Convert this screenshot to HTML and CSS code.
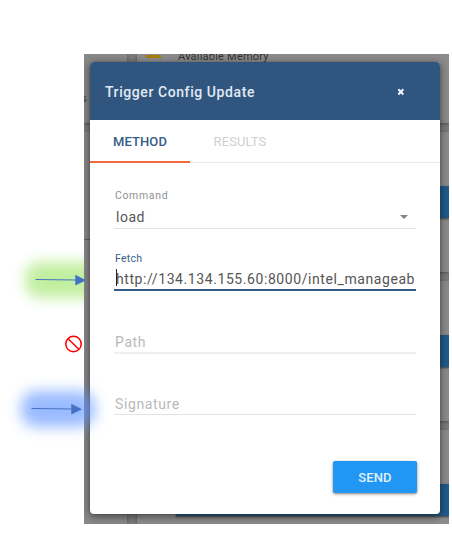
FILE: index.html
```html
<!DOCTYPE html>
<html lang="en">
<head>
<meta charset="utf-8">
<title>Trigger Config Update</title>
<link rel="stylesheet" href="styles.css">
</head>
<body>
<main class="stage">
  <div class="glow glow-green"></div>
  <section class="screen">
    <div class="rail"><div class="rail-card rail-first"><span class="rail-text">s</span></div><div class="rail-card rail-second"></div><div class="rail-card rail-third"></div></div>
    <div class="board">
      <div class="card card-top"><i class="swatch"></i><span>Available Memory</span></div>
      <div class="card"><div class="bar"></div></div>
      <div class="card"><div class="bar"></div></div>
      <div class="card card-last"><div class="bar"></div></div>
    </div>
    <div class="dialog">
      <header class="dialog-head">
        <h1>Trigger Config Update</h1>
        <svg class="close" width="8" height="8" viewBox="0 0 8 8"><path d="M1.3 1.3 6.3 6.5M6.3 1.3 1.3 6.5"/></svg>
      </header>
      <nav class="tabs"><div class="tab active">METHOD</div><div class="tab">RESULTS</div></nav>
      <form class="form">
        <div class="field command"><label>Command</label><div class="value select"><span>load</span><i class="caret"></i></div></div>
        <div class="field fetch"><label>Fetch</label><div class="value"><i class="cursor"></i><span>http://134.134.155.60:8000/intel_manageab</span></div></div>
        <div class="field empty path">Path</div>
        <div class="field empty signature">Signature</div>
        <button type="button" class="send">SEND</button>
      </form>
    </div>
  </section>
  <div class="glow glow-blue"></div>
  <svg class="marks" width="110" height="180" viewBox="0 260 110 180">
    <path class="line" d="M35.500 279.500 76 280M31.500 408.500 72 409"/>
    <path class="head" d="M75.300 274.800 86 280.200 75.300 285.500zM71.300 403.800 82 409.200 71.300 414.500z"/>
    <g class="ban"><circle cx="73.500" cy="344" r="7.700"/><path d="M68.300 339 78.900 349.200"/></g>
  </svg>
</main>
</body>
</html>
```
FILE: styles.css
```css
* { box-sizing: border-box; }
body { margin: 0; background: #fff; font-family: Roboto, sans-serif; }
.stage { position: relative; width: 452px; height: 540px; padding: 54px 3px 16px 84px; overflow: hidden; }
.screen { position: relative; display: flex; width: 365px; height: 470px; overflow: hidden; background: #7c7c7c; }
.rail { width: 43px; display: flex; flex-direction: column; gap: 9px; }
.rail-card { background: #888; box-shadow: 0 1px 3px #555; }
.rail-first { height: 69px; padding-top: 38px; }
.rail-second { height: 107px; }
.rail-third { flex: 1; margin-top: -8px; }
.rail-text { display: block; font-size: 11px; line-height: 14px; margin-left: -3px; color: #333; }
.board { flex: 1; margin-left: 10px; display: flex; flex-direction: column; gap: 9px; }
.card { height: 140px; padding-top: 54px; background: #8c8c8c; box-shadow: 0 1px 3px #555; }
.card-top { height: 69px; padding: 0 0 0 9px; display: flex; align-items: flex-start; color: #333; font-size: 11px; line-height: 13px; letter-spacing: .22px; }
.card-top span { margin: -4px 0 0 17px; }
.swatch { width: 15px; height: 3px; margin-top: 1px; background: #a8800d; }
.bar { height: 32px; margin-left: 39px; background: #205a8a; box-shadow: 0 1px 2px #444; }
.card-last { height: 94px; }
.dialog { position: absolute; left: 6px; top: 8px; width: 350px; height: 452px; border-radius: 4px; overflow: hidden; background: #fff; box-shadow: 0 2px 9px rgba(0,0,0,.55), 0 0 1px #555; }
.dialog-head { height: 58px; padding: 0 35px 0 15px; display: flex; justify-content: space-between; align-items: center; background: #30567f; color: #e2eaf3; }
h1 { margin: 2px 0 0; font-size: 14px; font-weight: 500; letter-spacing: .58px; }
.close { margin-top: 1px; fill: none; stroke: #f1f5fa; stroke-width: 2; }
.tabs { display: flex; height: 43px; border-bottom: 1px solid #e8e8e8; }
.tab { width: 100px; height: 43px; text-align: center; line-height: 43px; font-size: 13px; letter-spacing: .1px; color: #cfcfcf; }
.tab.active { color: #365c86; border-bottom: 2px solid #f26a3b; font-weight: 500; }
.form { display: flex; flex-direction: column; padding: 25px 24px 0; }
.field { border-bottom: 1px solid #e2e2e2; color: #555; }
.field label { display: block; padding: 1px 0 0 1px; font-size: 10.500px; line-height: 14px; letter-spacing: .65px; color: #929292; }
.value { position: relative; height: 25px; padding-left: 2px; font-size: 14px; line-height: 28px; letter-spacing: .58px; white-space: nowrap; }
.select { display: flex; justify-content: space-between; align-items: center; padding: 2px 8px 0 2px; letter-spacing: .5px; }
.command { height: 41px; }
.caret { border: 4px solid transparent; border-top-color: #858585; border-bottom: 0; }
.fetch { height: 40px; margin-top: 22px; border-bottom: 2px solid #315a88; }
.fetch label { color: #365f8c; letter-spacing: .25px; }
.fetch .value { height: 23px; line-height: 26px; }
.cursor { position: absolute; left: 2px; top: 3px; width: 1px; height: 17px; background: #222; }
.empty { padding-left: 1px; font-size: 14px; line-height: 24px; letter-spacing: .62px; color: #b9b9b9; }
.path { height: 24px; margin-top: 39px; border-bottom: 2px solid #efefef; }
.signature { height: 23px; margin-top: 38px; }
.send { align-self: flex-end; width: 84px; height: 32px; margin: 46px -1px 0 0; padding: 0; border: 0; border-radius: 2px; background: #2196f3; color: #e0f1ff; font: 500 13px Roboto, sans-serif; letter-spacing: .1px; box-shadow: 0 1px 3px rgba(0,0,0,.5); }
.glow { position: absolute; filter: blur(7px); }
.glow-green { left: 25px; top: 262px; width: 90px; height: 36px; border-radius: 15px; background: #c1efa0; }
.glow-blue { left: 21px; top: 391px; width: 74px; height: 36px; border-radius: 15px; background: rgba(91,146,255,.62); }
.marks { position: absolute; left: 0; top: 260px; }
.line { fill: none; stroke: #4472c4; stroke-width: 1; }
.head { fill: #4472c4; }
.ban { fill: none; stroke: #f00; stroke-width: 1.500; }
```
